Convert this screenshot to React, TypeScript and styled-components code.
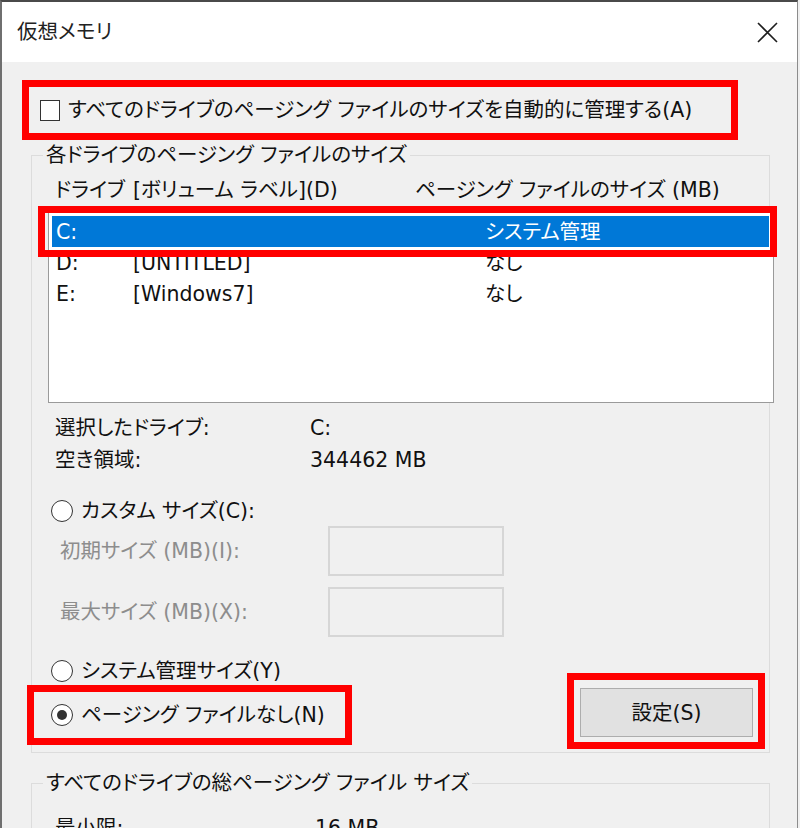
import React from 'react';
import styled, { createGlobalStyle } from 'styled-components';

const GlobalStyle = createGlobalStyle`
  html, body {
    margin: 0;
    padding: 0;
    background: #f0f0f0;
  }
  body {
    font-family: 'DejaVu Sans', 'Noto Sans CJK JP', sans-serif;
    font-size: 20.5px;
    font-feature-settings: 'palt';
    color: #111;
  }
  * {
    box-sizing: border-box;
  }
`;

const Window = styled.div`
  width: 798px;
  height: 828px;
  overflow: hidden;
  background: #f0f0f0;
  border-left: 2px solid #6f6f6f;
  border-top: 2px solid #4a4a4a;
  border-right: 1px solid #8c8c8c;
  display: flex;
  flex-direction: column;
`;

const TitleBar = styled.div`
  height: 60px;
  flex-shrink: 0;
  background: #fff;
  display: flex;
  align-items: center;
  justify-content: space-between;
  padding: 0 19px 0 15px;
`;

const Title = styled.span`
  line-height: 24px;
  color: #222;
`;

const Body = styled.div`
  padding: 18px 0 0 20px;
  display: flex;
  flex-direction: column;
  align-items: flex-start;
`;

// red annotation frames drawn over the dialog
const Highlight = styled.div<{ $w: number; $h: number }>`
  width: ${(p) => p.$w}px;
  height: ${(p) => p.$h}px;
  border: 7px solid #f00;
  display: flex;
  align-items: center;
  flex-shrink: 0;
`;

const AutoRow = styled(Highlight)`
  padding-left: 11px;
  gap: 8px;
`;

const CheckBox = styled.span`
  width: 20px;
  height: 21px;
  border: 1px solid #333;
  background: #fff;
  flex-shrink: 0;
`;

const Label = styled.span<{ $disabled?: boolean }>`
  line-height: 24px;
  white-space: nowrap;
  color: ${(p) => (p.$disabled ? '#8d8d8d' : 'inherit')};
`;

const Group = styled.fieldset<{ $top: number }>`
  margin: ${(p) => p.$top}px 0 0 9px;
  width: 739px;
  min-width: 0;
  border: 1px solid #dcdcdc;
  padding: 0 0 3px 0;
`;

const Legend = styled.legend`
  margin-left: 11px;
  padding: 0 3px;
  line-height: 24px;
  font-size: 20.5px;
`;

const Headers = styled.div`
  margin-top: 11px;
  padding-left: 23px;
  display: grid;
  grid-template-columns: 78px 282px 1fr;
  line-height: 24px;
  white-space: nowrap;
`;

const ListBox = styled.div`
  position: relative;
  margin: 10px 0 0 16px;
  width: 726px;
  height: 191px;
  background: #fff;
  border: 1px solid #9a9a9a;
  padding: 3px 4px 0 3px;
`;

const ListRow = styled.div<{ $selected?: boolean }>`
  height: 31px;
  line-height: 33px;
  padding-left: 4px;
  display: grid;
  grid-template-columns: 77px 352px 1fr;
  white-space: nowrap;
  background: ${(p) => (p.$selected ? '#0078d7' : 'transparent')};
  color: ${(p) => (p.$selected ? '#fff' : 'inherit')};
`;

const RowHighlight = styled.div`
  position: absolute;
  left: -11px;
  top: -7px;
  width: 739px;
  height: 51px;
  border: 7px solid #f00;
  pointer-events: none;
`;

const InfoGrid = styled.div<{ $col: number; $top: number }>`
  margin-top: ${(p) => p.$top}px;
  padding-left: 23px;
  display: grid;
  grid-template-columns: ${(p) => p.$col}px 1fr;
  line-height: 32px;
  white-space: nowrap;
`;

const RadioRow = styled.div<{ $h: number; $pad: number; $top?: number }>`
  height: ${(p) => p.$h}px;
  margin-top: ${(p) => p.$top ?? 0}px;
  padding-left: ${(p) => p.$pad}px;
  display: flex;
  align-items: center;
  gap: 8px;
`;

const Radio = styled.span<{ $checked?: boolean }>`
  width: 22px;
  height: 22px;
  border-radius: 50%;
  border: 1.5px solid #333;
  background: #fff;
  flex-shrink: 0;
  display: flex;
  align-items: center;
  justify-content: center;

  &::after {
    content: '';
    width: 10px;
    height: 10px;
    border-radius: 50%;
    background: ${(p) => (p.$checked ? '#333' : 'transparent')};
  }
`;

const SizeGrid = styled.div`
  padding-left: 28px;
  display: grid;
  grid-template-columns: 268px 176px;
  grid-auto-rows: 50px;
  row-gap: 11px;
  align-items: center;
`;

const SizeInput = styled.div`
  width: 176px;
  height: 50px;
  border: 2px solid #d6d6d6;
  background: #f0f0f0;
`;

const BottomRow = styled.div`
  margin: 20px 0 0 -5px;
  width: 738px;
  display: flex;
  justify-content: space-between;
  align-items: flex-start;
`;

const LeftColumn = styled.div`
  display: flex;
  flex-direction: column;
`;

const NoneRow = styled(Highlight)`
  padding-left: 17px;
  gap: 8px;
`;

const ButtonFrame = styled(Highlight)`
  margin-top: 16px;
  padding: 8px 5px 5px 6px;
  align-items: stretch;
`;

const Button = styled.button`
  flex: 1;
  font: inherit;
  font-feature-settings: 'palt';
  color: #111;
  background: #e1e1e1;
  border: 1px solid #adadad;
  padding: 0;
  line-height: 24px;
`;

const CloseIcon = () => (
  <svg width="21" height="21" viewBox="0 0 21 21" fill="none">
    <path d="M1 1L20 20M20 1L1 20" stroke="#1e1e1e" strokeWidth="1.6" />
  </svg>
);

const drives = [
  { drive: 'C:', label: '', size: 'システム管理', selected: true },
  { drive: 'D:', label: '[UNTITLED]', size: 'なし' },
  { drive: 'E:', label: '[Windows7]', size: 'なし' },
];

const App = () => {
  return (
    <>
      <GlobalStyle />
      <Window>
        <TitleBar>
          <Title>仮想メモリ</Title>
          <CloseIcon />
        </TitleBar>
        <Body>
          <AutoRow $w={716} $h={60}>
            <CheckBox />
            <Label>すべてのドライブのページング ファイルのサイズを自動的に管理する(A)</Label>
          </AutoRow>

          <Group $top={3}>
            <Legend>各ドライブのページング ファイルのサイズ</Legend>
            <Headers>
              <span>ドライブ</span>
              <span>[ボリューム ラベル](D)</span>
              <span>ページング ファイルのサイズ (MB)</span>
            </Headers>
            <ListBox>
              {drives.map((d) => (
                <ListRow key={d.drive} $selected={d.selected}>
                  <span>{d.drive}</span>
                  <span>{d.label}</span>
                  <span>{d.size}</span>
                </ListRow>
              ))}
              <RowHighlight />
            </ListBox>

            <InfoGrid $col={255} $top={9}>
              <span>選択したドライブ:</span>
              <span>C:</span>
              <span>空き領域:</span>
              <span>344462 MB</span>
            </InfoGrid>

            <RadioRow $h={30} $pad={19} $top={20}>
              <Radio />
              <Label>カスタム サイズ(C):</Label>
            </RadioRow>
            <SizeGrid>
              <Label $disabled>初期サイズ (MB)(I):</Label>
              <SizeInput />
              <Label $disabled>最大サイズ (MB)(X):</Label>
              <SizeInput />
            </SizeGrid>

            <BottomRow>
              <LeftColumn>
                <RadioRow $h={28} $pad={24}>
                  <Radio />
                  <Label>システム管理サイズ(Y)</Label>
                </RadioRow>
                <NoneRow $w={325} $h={60}>
                  <Radio $checked />
                  <Label>ページング ファイルなし(N)</Label>
                </NoneRow>
              </LeftColumn>
              <ButtonFrame $w={198} $h={76}>
                <Button>設定(S)</Button>
              </ButtonFrame>
            </BottomRow>
          </Group>

          <Group $top={18}>
            <Legend>すべてのドライブの総ページング ファイル サイズ</Legend>
            <InfoGrid $col={260} $top={17}>
              <span>最小限:</span>
              <span>16 MB</span>
            </InfoGrid>
          </Group>
        </Body>
      </Window>
    </>
  );
};

export default App;
